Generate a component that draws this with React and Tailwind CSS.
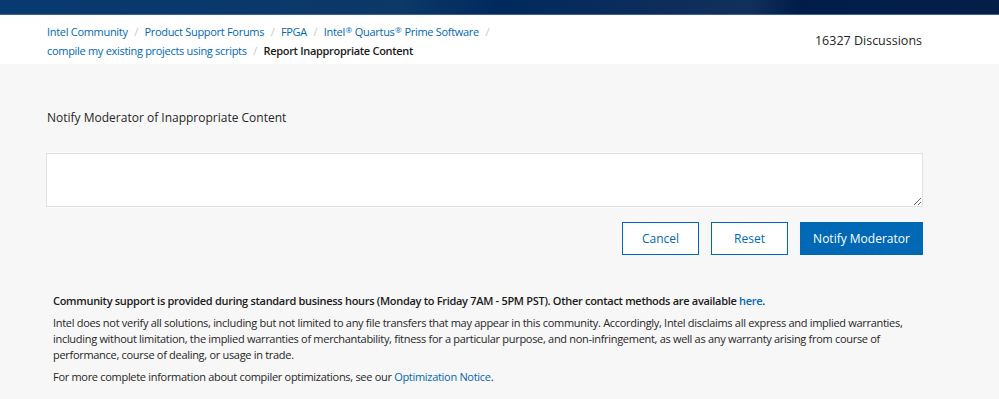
import React from "react";

const font = { fontFamily: '"Open Sans", "Noto Sans", sans-serif' };

function Crumb({ children }) {
  return <a className="text-[#0068b5] hover:underline">{children}</a>;
}
function Sep() {
  return <span className="text-[#c8c8c8] mx-[6.5px]">/</span>;
}
function Reg() {
  return <span className="text-[8px] leading-none relative top-[-3px] mx-[0.5px]">®</span>;
}

export default function App() {
  return (
    <div className="w-[999px] h-[399px] bg-[#f7f7f7] overflow-hidden text-[#262626]" style={font}>
      <div className="h-[15px] bg-[linear-gradient(90deg,#073a70_0%,#0b3968_40%,#002a5e_50%,#0c2d5a_65%,#12305c_75%,#001d4a_80%,#041f48_100%)] border-b border-[#40618f]" />
      <div className="bg-white h-[49px] flex items-start justify-between pl-[47px] pr-[77px]">
        <div className="text-[11px] leading-[19px] pt-[7px] tracking-[-0.3px]">
          <div className="h-[19px]">
            <Crumb>Intel Community</Crumb>
            <Sep />
            <Crumb>Product Support Forums</Crumb>
            <Sep />
            <Crumb>FPGA</Crumb>
            <Sep />
            <Crumb>Intel<Reg /> Quartus<Reg /> Prime Software</Crumb>
            <Sep />
          </div>
          <div className="h-[19px]">
            <Crumb>compile my existing projects using scripts</Crumb>
            <Sep />
            <span className="font-semibold text-[#1a1a1a]">Report Inappropriate Content</span>
          </div>
        </div>
        <div className="text-[12.5px] pt-[17px] text-[#262626]">16327 Discussions</div>
      </div>

      <div className="pl-[46px] pr-[76px]">
        <div className="pt-[45px] text-[12px] leading-[18px] pl-[1px]">Notify Moderator of Inappropriate Content</div>
        <textarea className="block mt-[26px] w-full h-[54px] bg-white border border-[#e1e1e1] resize-y outline-none" />
        <div className="flex justify-end gap-[12px] mt-[15px]">
          <button className="w-[77px] h-[33px] border border-[#0068b5] bg-white text-[#0068b5] text-[12px]">Cancel</button>
          <button className="w-[77px] h-[33px] border border-[#0068b5] bg-white text-[#0068b5] text-[12px]">Reset</button>
          <button className="w-[123px] h-[33px] bg-[#0068b5] text-white text-[12px]">Notify Moderator</button>
        </div>
      </div>

      <div className="pl-[53px] pr-[60px] pt-[38px] text-[11px] leading-[16px] tracking-[-0.3px]">
        <p className="font-semibold text-[#1a1a1a]">
          Community support is provided during standard business hours (Monday to Friday 7AM - 5PM PST). Other contact methods are available <a className="text-[#0068b5]">here</a>.
        </p>
        <p className="mt-[6px] text-[#262626]">
          Intel does not verify all solutions, including but not limited to any file transfers that may appear in this community. Accordingly, Intel disclaims all express and implied warranties, including without limitation, the implied warranties of merchantability, fitness for a particular purpose, and non-infringement, as well as any warranty arising from course of performance, course of dealing, or usage in trade.
        </p>
        <p className="mt-[6px] text-[#262626]">
          For more complete information about compiler optimizations, see our <a className="text-[#0068b5]">Optimization Notice</a>.
        </p>
      </div>
    </div>
  );
}
